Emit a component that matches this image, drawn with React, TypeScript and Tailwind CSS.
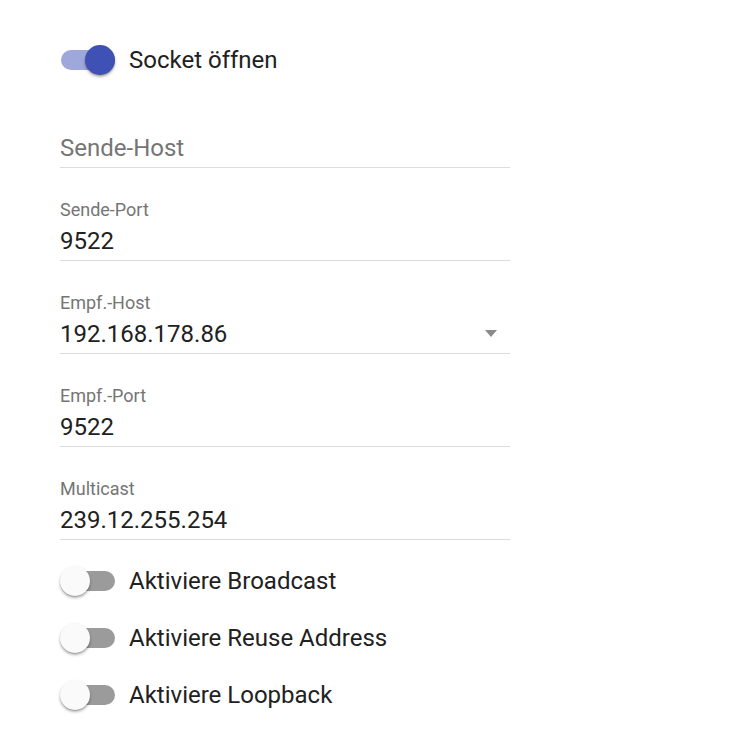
import { useState } from "react";

function Toggle({ label, initial }: { label: string; initial: boolean }) {
  const [on, setOn] = useState(initial);
  return (
    <div className="flex items-center h-[57px]">
      <button
        onClick={() => setOn(!on)}
        className="relative w-[55px] h-[30px] flex items-center shrink-0"
      >
        <span
          className={`block ml-[1px] w-[54px] h-[20px] rounded-full ${
            on ? "bg-[#9fa8da]" : "bg-[#9b9b9b]"
          }`}
        />
        <span
          className={`absolute top-0 w-[30px] h-[30px] rounded-full shadow-[0_2px_3px_rgba(0,0,0,0.3),0_1px_1px_rgba(0,0,0,0.14)] ${
            on ? "left-[25px] bg-[#3f51b5]" : "left-0 bg-[#fafafa]"
          }`}
        />
      </button>
      <span className="ml-[14px] text-[24px] leading-[30px] text-[#212121]">{label}</span>
    </div>
  );
}

function Field({ label, value, select }: { label: string; value: string; select?: boolean }) {
  return (
    <div className="mt-[31px] w-[450px]">
      <div className="h-[22px] text-[18px] leading-[22px] text-[#757575]">{label}</div>
      <div className="flex items-center justify-between h-[40px] border-b border-[#dcdcdc] text-[24px] text-[#212121]">
        <span>{value}</span>
        {select && (
          <svg width="12" height="7" viewBox="0 0 12 7" className="mr-[13px]">
            <path d="M0 0h12L6 7z" fill="#8a8a8a" />
          </svg>
        )}
      </div>
    </div>
  );
}

export default function App() {
  return (
    <div
      className="min-h-[749px] bg-white pl-[60px] pt-[31px]"
      style={{ fontFamily: "Roboto, sans-serif" }}
    >
      <Toggle label="Socket öffnen" initial={true} />

      {/* Sende-Host (empty, placeholder label) */}
      <div className="mt-[40px] w-[450px] h-[40px] flex items-center border-b border-[#dcdcdc] text-[24px] text-[#757575]">
        Sende-Host
      </div>

      <Field label="Sende-Port" value="9522" />
      <Field label="Empf.-Host" value="192.168.178.86" select />
      <Field label="Empf.-Port" value="9522" />
      <Field label="Multicast" value="239.12.255.254" />

      <div className="mt-[12px]">
        <Toggle label="Aktiviere Broadcast" initial={false} />
        <Toggle label="Aktiviere Reuse Address" initial={false} />
        <Toggle label="Aktiviere Loopback" initial={false} />
      </div>
    </div>
  );
}
